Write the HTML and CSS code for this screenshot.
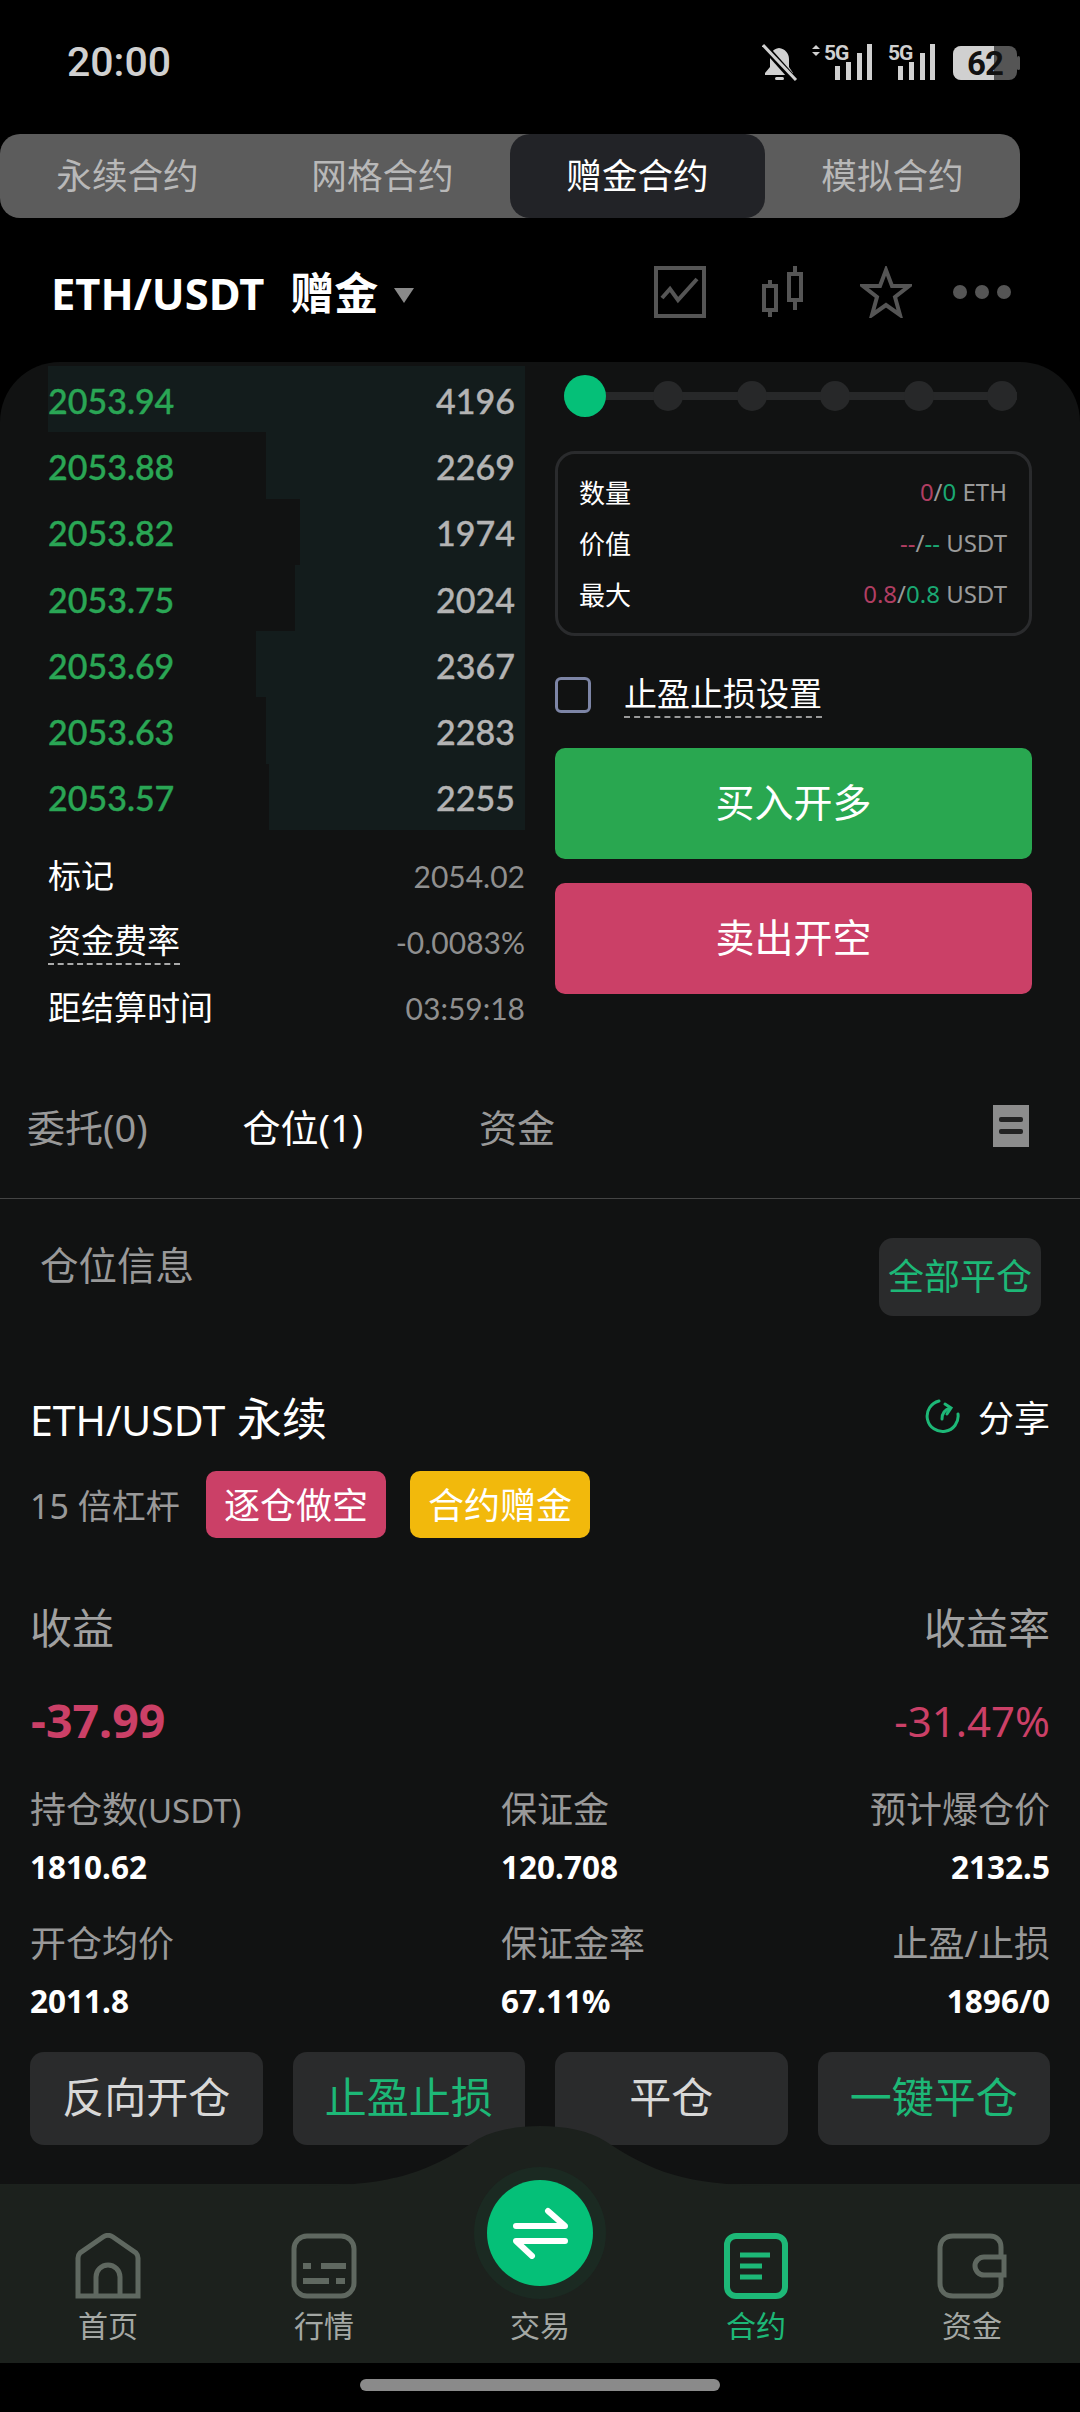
FILE: index.html
```html
<!DOCTYPE html>
<html lang="zh-CN">
<head>
    <meta charset="UTF-8">
    <meta name="viewport" content="width=device-width, initial-scale=1.0">
    <title>赠金合约</title>
    <link rel="stylesheet" href="styles.css">
</head>
<body>
    <div class="status-bar">
        <span class="time">20:00</span>
        <svg class="status-icons" width="258" height="60" viewBox="0 -12 258 60">
            <path d="M17 4c-6 1-9 5-9 11v8l-5 6v2h28v-2l-4-6v-8c0-6-4-10-10-11z" fill="#d0d0d0"/>
            <rect x="13" y="33" width="9" height="3" rx="1.5" fill="#d0d0d0"/>
            <path d="M2 2l32 36" stroke="#000" stroke-width="7"/>
            <path d="M1 1l33 35" stroke="#d0d0d0" stroke-width="3"/>
            <path d="M49 4l4-4 4 4zM49 7l4 4 4-4z" fill="#d0d0d0" transform="translate(1 1)"/>
            <text class="net" x="62" y="16">5G</text>
            <rect x="73" y="22" width="5" height="14" fill="#d0d0d0"/>
            <rect x="84" y="18" width="5" height="18" fill="#d0d0d0"/>
            <rect x="95" y="9" width="5" height="27" fill="#d0d0d0"/>
            <rect x="105" y="0" width="5" height="36" fill="#d0d0d0"/>
            <text class="net" x="126" y="16">5G</text>
            <rect x="136" y="22" width="5" height="14" fill="#d0d0d0"/>
            <rect x="147" y="18" width="5" height="18" fill="#d0d0d0"/>
            <rect x="158" y="9" width="5" height="27" fill="#d0d0d0"/>
            <rect x="168" y="0" width="5" height="36" fill="#d0d0d0"/>
            <rect x="191" y="2" width="64" height="34" rx="8" fill="#555"/>
            <path d="M199 2h33v34h-33a8 8 0 0 1-8-8v-18a8 8 0 0 1 8-8z" fill="#d0d0d0"/>
            <rect x="255" y="12" width="3" height="14" rx="1.5" fill="#555"/>
            <text class="batt" x="223" y="31" text-anchor="middle">62</text>
        </svg>
    </div>

    <div class="contract-tabs">
        <div class="contract-tab">永续合约</div>
        <div class="contract-tab">网格合约</div>
        <div class="contract-tab active">赠金合约</div>
        <div class="contract-tab">模拟合约</div>
    </div>

    <div class="pair-bar">
        <div class="pair-name">ETH/USDT<span class="pair-tag">赠金</span><span class="caret"></span></div>
        <div class="pair-actions">
            <svg width="52" height="52" viewBox="0 0 52 52" fill="none" stroke="#555" stroke-width="4"><rect x="2" y="2" width="48" height="48"/><path d="M8 32l8-9 8 11 19-21"/></svg>
            <svg class="icon-candle" width="42" height="52" viewBox="0 0 42 52" fill="none" stroke="#555" stroke-width="4"><rect x="2" y="20" width="12" height="24"/><path d="M8 14v6M8 44v7"/><rect x="27" y="8" width="12" height="26"/><path d="M33 0v8M33 34v10"/></svg>
            <svg class="icon-star" width="52" height="52" viewBox="0 0 52 52" fill="none" stroke="#555" stroke-width="4"><path d="M26 4l6 16h17l-14 11 5 18-14-10-14 10 5-18L3 20h17z"/></svg>
            <svg class="icon-more" width="60" height="16" viewBox="0 0 60 16" fill="#555"><circle cx="8" cy="8" r="7"/><circle cx="30" cy="8" r="7"/><circle cx="52" cy="8" r="7"/></svg>
        </div>
    </div>

    <div class="panel">
        <div class="trade">
            <div class="book-col">
                <div class="book">
                    <div class="book-row"><div class="book-bar" style="width: 477px"></div><span class="price">2053.94</span><span class="qty">4196</span></div>
                    <div class="book-row"><div class="book-bar" style="width: 259px"></div><span class="price">2053.88</span><span class="qty">2269</span></div>
                    <div class="book-row"><div class="book-bar" style="width: 225px"></div><span class="price">2053.82</span><span class="qty">1974</span></div>
                    <div class="book-row"><div class="book-bar" style="width: 230px"></div><span class="price">2053.75</span><span class="qty">2024</span></div>
                    <div class="book-row"><div class="book-bar" style="width: 269px"></div><span class="price">2053.69</span><span class="qty">2367</span></div>
                    <div class="book-row"><div class="book-bar" style="width: 259px"></div><span class="price">2053.63</span><span class="qty">2283</span></div>
                    <div class="book-row"><div class="book-bar" style="width: 256px"></div><span class="price">2053.57</span><span class="qty">2255</span></div>
                </div>
                <div class="stats">
                    <div class="stat-row"><span class="stat-label">标记</span><span class="stat-value">2054.02</span></div>
                    <div class="stat-row"><span class="stat-label dashed">资金费率</span><span class="stat-value">-0.0083%</span></div>
                    <div class="stat-row"><span class="stat-label">距结算时间</span><span class="stat-value">03:59:18</span></div>
                </div>
            </div>
            <div class="order-col">
                <div class="slider">
                    <span class="knob"></span>
                    <span class="stop"></span><span class="stop"></span><span class="stop"></span><span class="stop"></span><span class="stop"></span>
                </div>
                <div class="order-box">
                    <div class="order-row"><span>数量</span><span class="order-val"><i class="red">0</i>/<i class="green">0</i> ETH</span></div>
                    <div class="order-row"><span>价值</span><span class="order-val"><i class="red">--</i>/<i class="green">--</i> USDT</span></div>
                    <div class="order-row"><span>最大</span><span class="order-val"><i class="red">0.8</i>/<i class="green">0.8</i> USDT</span></div>
                </div>
                <div class="tpsl">
                    <span class="checkbox"></span>
                    <span class="tpsl-label">止盈止损设置</span>
                </div>
                <div class="big-btn buy">买入开多</div>
                <div class="big-btn sell">卖出开空</div>
            </div>
        </div>

        <div class="list-tabs">
            <span class="list-tab">委托(0)</span>
            <span class="list-tab active">仓位(1)</span>
            <span class="list-tab">资金</span>
            <svg class="list-icon" width="36" height="42" viewBox="0 0 36 42"><rect width="36" height="42" fill="#8c8c8c"/><rect x="6" y="12" width="24" height="5" rx="2" fill="#222"/><rect x="6" y="24" width="24" height="5" rx="2" fill="#222"/></svg>
        </div>

        <div class="pos-head">
            <span class="pos-title">仓位信息</span>
            <span class="close-all">全部平仓</span>
        </div>

        <div class="pos-card">
            <div class="pos-name-row">
                <span class="pos-name"><span class="pos-symbol">ETH/USDT</span> 永续</span>
                <span class="share">
                    <svg width="36" height="36" viewBox="0 0 36 36" fill="none" stroke="#1db877" stroke-width="3" stroke-linecap="round"><path d="M15 3a15.500 15.500 0 1 0 19 13"/><path d="M18 21c0-5 2-9 8-11"/><path d="M21 6l6 4-4 6"/></svg>
                    分享
                </span>
            </div>
            <div class="pos-tags">
                <span class="leverage">15 倍杠杆</span>
                <span class="badge badge-red">逐仓做空</span>
                <span class="badge badge-yellow">合约赠金</span>
            </div>
            <div class="pnl-head"><span>收益</span><span>收益率</span></div>
            <div class="pnl-vals"><span class="pnl-amount">-37.99</span><span class="pnl-rate">-31.47%</span></div>
            <div class="pos-grid">
                <div class="cell"><div class="cell-label">持仓数<small>(USDT)</small></div><div class="cell-value">1810.62</div></div>
                <div class="cell"><div class="cell-label">保证金</div><div class="cell-value">120.708</div></div>
                <div class="cell end"><div class="cell-label">预计爆仓价</div><div class="cell-value">2132.5</div></div>
                <div class="cell"><div class="cell-label">开仓均价</div><div class="cell-value">2011.8</div></div>
                <div class="cell"><div class="cell-label">保证金率</div><div class="cell-value">67.11%</div></div>
                <div class="cell end"><div class="cell-label">止盈/止损</div><div class="cell-value">1896/0</div></div>
            </div>
            <div class="pos-actions">
                <span class="act-btn">反向开仓</span>
                <span class="act-btn act-green">止盈止损</span>
                <span class="act-btn">平仓</span>
                <span class="act-btn act-green">一键平仓</span>
            </div>
        </div>
    </div>

    <div class="bottom-nav">
        <svg class="nav-hump" width="480" height="62" viewBox="0 0 480 62"><path d="M0 62c90 0 125-12 175-45 30-20 100-20 130 0 50 33 85 45 175 45z" fill="#1c211d"/></svg>
        <div class="swap-ring">
            <div class="swap-btn">
                <svg width="60" height="52" viewBox="0 0 60 52" fill="none" stroke="#fff" stroke-width="6" stroke-linecap="round" stroke-linejoin="round"><path d="M6 19h49L38 4"/><path d="M55 34H6l16 15"/></svg>
            </div>
        </div>
        <div class="nav-item">
            <svg width="66" height="66" viewBox="0 0 66 66" fill="none" stroke="#5f6860" stroke-width="5"><path d="M3 63V25c0-2 1-4 2-5L28 4c3-2 7-2 10 0l23 16c1 1 2 3 2 5v38z"/><path d="M21 63V44a12 12 0 0 1 24 0v19"/></svg>
            <span>首页</span>
        </div>
        <div class="nav-item">
            <svg width="66" height="66" viewBox="0 0 66 66" fill="none" stroke="#5f6860" stroke-width="5"><rect x="3" y="3" width="60" height="60" rx="13"/><path d="M12 33h8M30 33h25M12 48h26M45 48h9" stroke-width="6"/></svg>
            <span>行情</span>
        </div>
        <div class="nav-item trade-item"><span>交易</span></div>
        <div class="nav-item active">
            <svg width="66" height="66" viewBox="0 0 66 66" fill="none" stroke="#1db877" stroke-width="6"><rect x="4" y="3" width="58" height="60" rx="9"/><path d="M17 22h30M17 33h22M17 44h22" stroke-width="5"/></svg>
            <span>合约</span>
        </div>
        <div class="nav-item">
            <svg width="70" height="66" viewBox="0 0 70 66" fill="none" stroke="#5f6860" stroke-width="5"><path d="M64 24V14c0-6-4-11-11-11H16C8 3 3 8 3 16v34c0 8 5 13 13 13h37c7 0 11-5 11-11V42"/><path d="M67 24H47a9 9 0 0 0 0 18h20z"/></svg>
            <span>资金</span>
        </div>
    </div>
    <div class="home-strip"><div class="home-bar"></div></div>
</body>
</html>
```

FILE: styles.css
```css
* {
    box-sizing: border-box;
}
body {
    width: 1080px;
    height: 2412px;
    margin: 0;
    overflow: hidden;
    background: #000;
    color: #fff;
    font-family: 'Noto Sans', 'Noto Sans CJK SC', sans-serif;
}
i {
    font-style: normal;
}
.status-bar {
    height: 134px;
    padding: 38px 60px 0 67px;
    display: flex;
    justify-content: space-between;
    align-items: flex-start;
}
.time {
    font-family: Roboto, sans-serif;
    font-size: 41px;
    font-weight: 500;
    line-height: 48px;
    color: #d0d0d0;
}
.status-icons {
    margin-top: -6px;
}
.net {
    font-family: Roboto, sans-serif;
    font-size: 21px;
    font-weight: 700;
    letter-spacing: -1px;
    fill: #d0d0d0;
}
.batt {
    font-family: Roboto, sans-serif;
    font-size: 33px;
    font-weight: 700;
    letter-spacing: -1px;
    fill: #111;
}
.contract-tabs {
    width: 1020px;
    height: 84px;
    display: flex;
    background: #5c5c5c;
    border-radius: 20px;
}
.contract-tab {
    flex: 1;
    padding-bottom: 5px;
    display: flex;
    align-items: center;
    justify-content: center;
    font-size: 35.6px;
    color: #b8b8b8;
    border-radius: 20px;
}
.contract-tab.active {
    background: #222327;
    color: #fff;
}
.pair-bar {
    height: 144px;
    padding: 0 68px 0 51px;
    display: flex;
    justify-content: space-between;
    align-items: center;
}
.pair-name {
    font-size: 43.5px;
    font-weight: 700;
    display: flex;
    align-items: center;
    line-height: 60px;
    margin-top: 6px;
}
.pair-tag {
    margin-left: 26px;
    font-size: 44px;
}
.caret {
    margin: 4px 0 0 16px;
    width: 0;
    height: 0;
    border-left: 10px solid transparent;
    border-right: 10px solid transparent;
    border-top: 15px solid #8a8a8a;
}
.pair-actions {
    display: flex;
    align-items: center;
    margin-top: 4px;
}
.icon-candle {
    margin-left: 56px;
}
.icon-star {
    margin-left: 56px;
}
.icon-more {
    margin-left: 40px;
}
.panel {
    height: 1822px;
    background: #111212;
    border-radius: 60px 60px 0 0;
}
.trade {
    display: flex;
    padding: 4px 48px 0;
    gap: 30px;
}
.book-col {
    width: 477px;
}
.book-row {
    position: relative;
    height: 66.3px;
    padding: 2px 10px 0 0;
    display: flex;
    justify-content: space-between;
    align-items: center;
    font-family: Lato, sans-serif;
    font-size: 34px;
    font-weight: 500;
    -webkit-text-stroke: 0.4px;
}
.book-bar {
    position: absolute;
    top: 0;
    right: 0;
    bottom: 0;
    background: #131c1c;
}
.price,
.qty {
    position: relative;
}
.price {
    color: #2aa655;
}
.qty {
    color: #b4b4b4;
}
.stats {
    margin-top: 13px;
}
.stat-row {
    height: 66px;
    display: flex;
    justify-content: space-between;
    align-items: center;
}
.stat-label {
    font-size: 33px;
    line-height: 44px;
}
.dashed {
    border-bottom: 2px dashed #aaa;
}
.stat-value {
    font-family: Lato, sans-serif;
    font-size: 30px;
    color: #8f8f8f;
}
.order-col {
    width: 477px;
}
.slider {
    position: relative;
    height: 42px;
    margin: 9px 15px 0 9px;
    display: flex;
    justify-content: space-between;
    align-items: center;
}
.slider::before {
    content: '';
    position: absolute;
    left: 0;
    right: 0;
    top: 17px;
    height: 8px;
    background: #272829;
}
.knob {
    position: relative;
    width: 42px;
    height: 42px;
    margin-right: -6px;
    border-radius: 50%;
    background: #05c078;
}
.stop {
    position: relative;
    width: 30px;
    height: 30px;
    border-radius: 50%;
    background: #272829;
}
.order-box {
    height: 185px;
    margin-top: 34px;
    padding: 12px 22px 0 21px;
    border: 3px solid #2a2b2d;
    border-radius: 20px;
}
.order-row {
    height: 51px;
    display: flex;
    justify-content: space-between;
    align-items: center;
    font-size: 26px;
}
.order-val {
    font-size: 24px;
    color: #9a9a9a;
}
.red {
    color: #b03e62;
}
.green {
    color: #1aa873;
}
.tpsl {
    height: 36px;
    margin-top: 41px;
    display: flex;
    align-items: center;
}
.checkbox {
    width: 36px;
    height: 36px;
    border: 3px solid #7d85a6;
    border-radius: 6px;
}
.tpsl-label {
    margin-left: 33px;
    font-size: 33px;
    line-height: 44px;
    border-bottom: 2px dashed #999;
}
.big-btn {
    height: 111px;
    padding-bottom: 8px;
    display: flex;
    align-items: center;
    justify-content: center;
    font-size: 39px;
    border-radius: 10px;
}
.buy {
    margin-top: 35px;
    background: #29a750;
}
.sell {
    margin-top: 24px;
    background: #cb4067;
}
.list-tabs {
    height: 146px;
    margin-top: 12px;
    padding: 0 51px 0 27px;
    display: flex;
    align-items: center;
    border-bottom: 1px solid #444;
    font-size: 38px;
    color: #999;
}
.list-tab.active {
    color: #fff;
}
.list-tab:nth-child(2) {
    margin-left: 95px;
}
.list-tab:nth-child(3) {
    margin-left: 116px;
}
.list-icon {
    margin-left: auto;
}
.pos-head {
    height: 167px;
    padding: 39px 39px 0 40px;
    display: flex;
    justify-content: space-between;
    align-items: flex-start;
}
.pos-title {
    font-size: 38.5px;
    line-height: 54px;
    color: #999;
}
.close-all {
    width: 162px;
    height: 78px;
    padding-bottom: 5px;
    display: flex;
    align-items: center;
    justify-content: center;
    font-size: 36px;
    color: #1db877;
    background: #2a2b2c;
    border-radius: 14px;
}
.pos-card {
    padding: 0 30px;
}
.pos-name-row {
    height: 100px;
    display: flex;
    justify-content: space-between;
    align-items: center;
}
.pos-name {
    font-size: 45px;
}
.pos-symbol {
    font-size: 41px;
}
.share {
    display: flex;
    align-items: center;
    gap: 18px;
    font-size: 36px;
}
.pos-tags {
    height: 67px;
    display: flex;
    align-items: center;
    margin-top: 5px;
}
.leverage {
    width: 176px;
    font-size: 34px;
    color: #999;
}
.badge {
    width: 180px;
    height: 67px;
    padding-bottom: 3px;
    display: flex;
    align-items: center;
    justify-content: center;
    font-size: 36px;
    border-radius: 10px;
}
.badge-red {
    background: #cb4067;
}
.badge-yellow {
    margin-left: 24px;
    background: #f2b90c;
}
.pnl-head,
.pnl-vals {
    display: flex;
    justify-content: space-between;
    align-items: center;
}
.pnl-head {
    height: 62px;
    margin-top: 56px;
    font-size: 42px;
    color: #a0a0a0;
}
.pnl-vals {
    height: 70px;
    margin-top: 29px;
    color: #cb4067;
}
.pnl-amount {
    margin-left: 1px;
    font-size: 46.5px;
    font-weight: 700;
}
.pnl-rate {
    font-size: 42px;
}
.pos-grid {
    margin-top: 30px;
    display: grid;
    grid-template-columns: 471px 1fr 1fr;
    row-gap: 29px;
}
.cell-label {
    height: 50px;
    line-height: 50px;
    font-size: 36px;
    color: #999;
}
.cell-label small {
    font-size: 33px;
}
.cell-value {
    height: 46px;
    line-height: 46px;
    margin-top: 9px;
    font-size: 31.5px;
    font-weight: 700;
}
.cell.end {
    text-align: right;
}
.pos-actions {
    margin-top: 28px;
    display: grid;
    grid-template-columns: repeat(4, 1fr);
    gap: 30px;
}
.act-btn {
    height: 93px;
    padding-bottom: 8px;
    display: flex;
    align-items: center;
    justify-content: center;
    font-size: 42px;
    color: #d8d8d8;
    background: #2a2b2c;
    border-radius: 14px;
}
.act-green {
    color: #1db877;
}
.bottom-nav {
    position: relative;
    height: 179px;
    display: flex;
    background: #1c211d;
}
.nav-hump {
    position: absolute;
    left: 300px;
    top: -60px;
}
.swap-ring {
    position: absolute;
    left: 474px;
    top: -17px;
    width: 132px;
    height: 132px;
    border-radius: 50%;
    display: flex;
    align-items: center;
    justify-content: center;
    background: #1b2a22;
}
.swap-btn {
    width: 106px;
    height: 106px;
    border-radius: 50%;
    display: flex;
    align-items: center;
    justify-content: center;
    background: #05c078;
}
.nav-item {
    flex: 1;
    height: 100%;
    padding-top: 49px;
    display: flex;
    flex-direction: column;
    align-items: center;
    font-size: 30px;
    color: #a4a8a4;
}
.nav-item span {
    margin-top: 5px;
    line-height: 44px;
}
.trade-item span {
    margin-top: 71px;
}
.nav-item.active {
    color: #1db877;
}
.home-strip {
    height: 49px;
    padding-top: 16px;
}
.home-bar {
    width: 360px;
    height: 12px;
    margin: 0 auto;
    background: #8a8a8a;
    border-radius: 6px;
}
```
